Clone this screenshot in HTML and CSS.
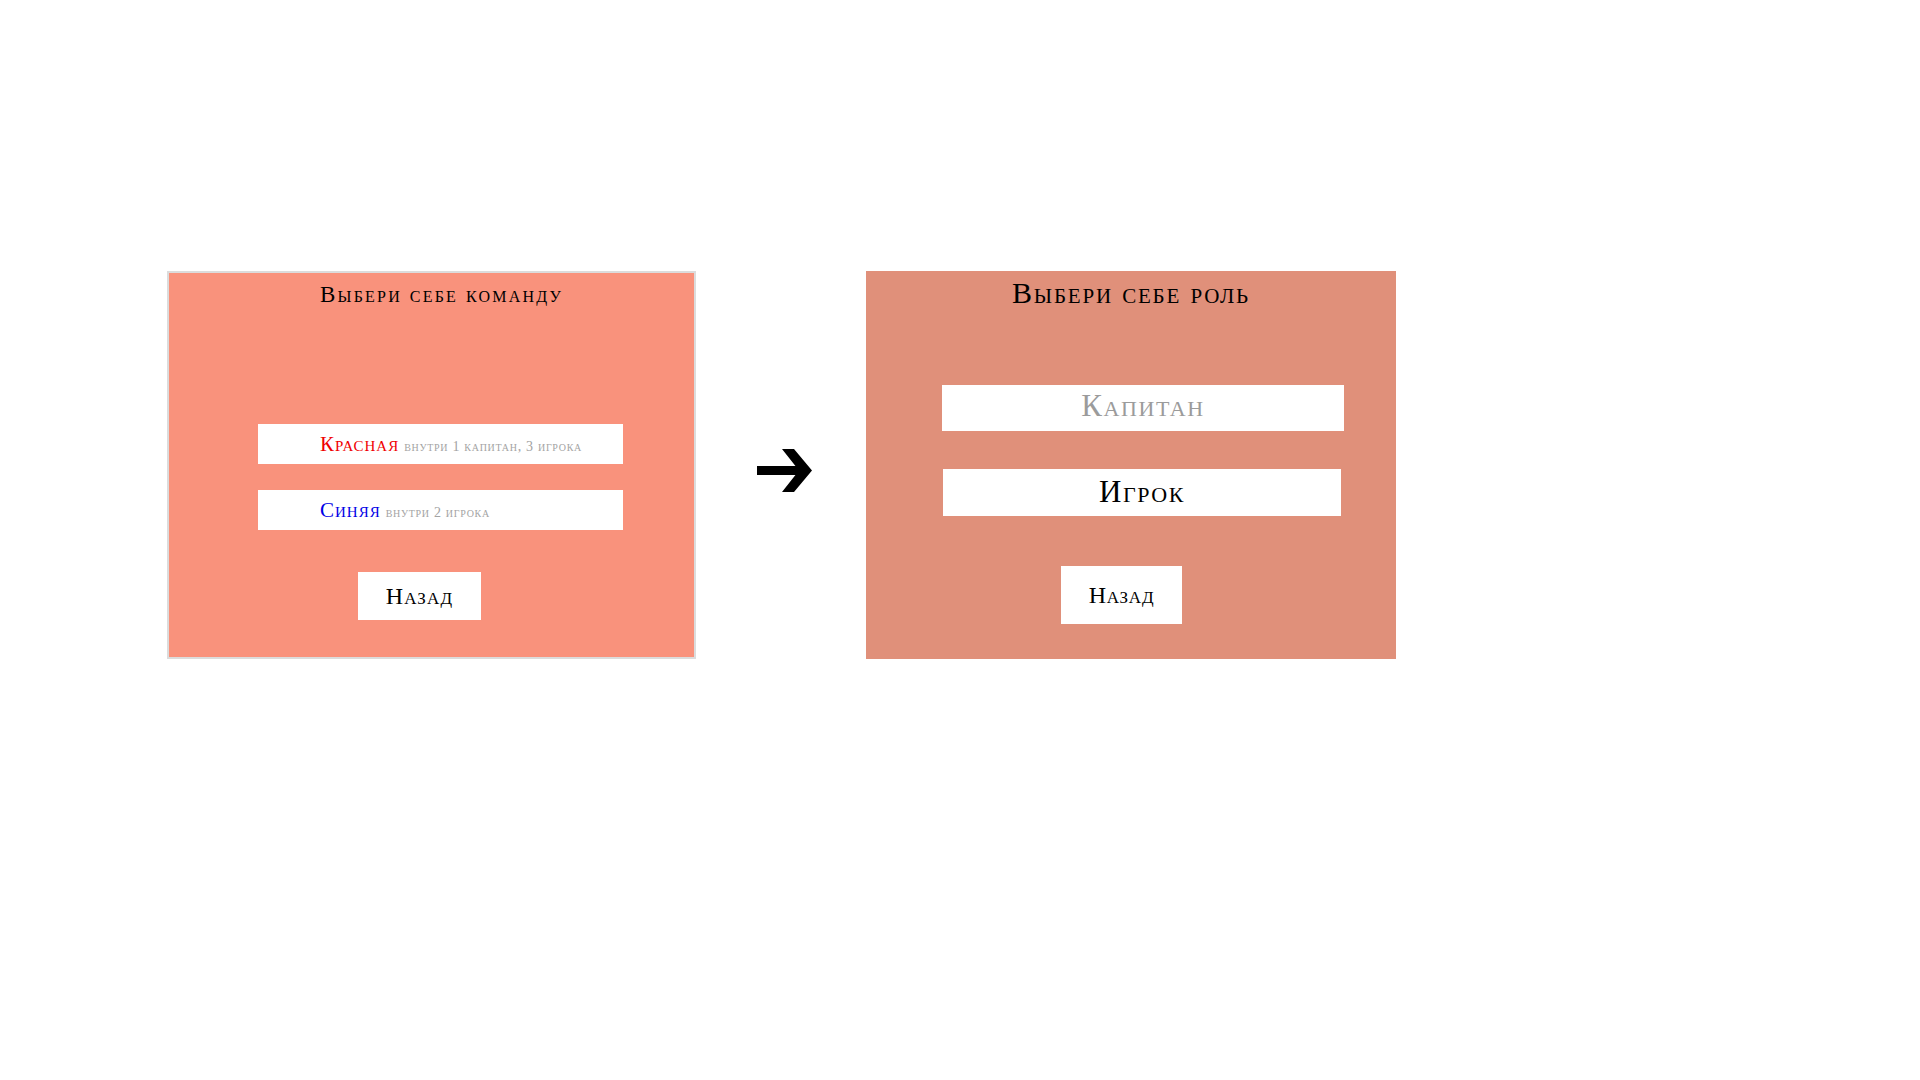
FILE: index.html
```html
<!DOCTYPE html>
<html lang="ru">
<head>
    <meta charset="UTF-8">
    <meta name="viewport" content="width=device-width, initial-scale=1.0">
    <title>Выбор команды и роли</title>
    <link rel="stylesheet" href="styles.css">
</head>
<body>
    <div class="screen">
        <section class="panel panel-team">
            <h2 class="panel-title title-team">Выбери себе команду</h2>
            <div class="option option-red">
                <span class="team team-red">Красная</span>
                <span class="hint">внутри 1 капитан, 3 игрока</span>
            </div>
            <div class="option option-blue">
                <span class="team team-blue">Синяя</span>
                <span class="hint">внутри 2 игрока</span>
            </div>
            <div class="back back-team">Назад</div>
        </section>

        <svg class="arrow" viewBox="0 0 55 46" width="55" height="46">
            <rect x="0" y="18" width="44" height="9" fill="#000"/>
            <polygon points="25,1 37,1 55,22.5 37,44 25,44 42,22.5" fill="#000"/>
        </svg>

        <section class="panel panel-role">
            <h2 class="panel-title title-role">Выбери себе роль</h2>
            <div class="role role-captain">Капитан</div>
            <div class="role role-player">Игрок</div>
            <div class="back back-role">Назад</div>
        </section>
    </div>
</body>
</html>
```

FILE: styles.css
```css
body {
    margin: 0;
    background: #fff;
    font-family: "Liberation Serif", "Times New Roman", serif;
    color: #000;
}

.screen {
    display: flex;
    align-items: flex-start;
    padding: 271px 0 0 167px;
}

.panel {
    display: flex;
    flex-direction: column;
    align-items: flex-start;
    box-sizing: border-box;
}

.panel-team {
    width: 529px;
    height: 388px;
    border: 2px solid #dcdcdc;
    background: #f9927c;
}

.panel-role {
    width: 530px;
    height: 388px;
    background: #e0907a;
}

.arrow {
    display: block;
    margin: 177px 54px 0 61px;
}

.panel-title {
    margin: 0;
    font-weight: 400;
    font-variant: small-caps;
    white-space: nowrap;
}

.title-team {
    margin: 10px 0 0 151px;
    font-size: 23px;
    line-height: 24px;
    letter-spacing: 2.2px;
}

.title-role {
    align-self: center;
    margin-top: 6px;
    font-size: 30px;
    line-height: 32px;
    letter-spacing: 1.8px;
}

/* team options */
.option {
    display: flex;
    align-items: baseline;
    gap: 5px;
    width: 365px;
    height: 40px;
    box-sizing: border-box;
    padding: 8px 0 0 62px;
    margin-left: 89px;
    background: #fff;
    font-variant: small-caps;
    white-space: nowrap;
}

.option-red {
    margin-top: 117px;
}

.option-blue {
    margin-top: 26px;
}

.team {
    font-size: 21px;
    line-height: 24px;
    letter-spacing: 1px;
}

.team-red {
    color: #f00000;
}

.team-blue {
    color: #0000e6;
}

.hint {
    font-size: 14px;
    letter-spacing: 0.7px;
    color: #a3a3a3;
}

/* roles */
.role {
    display: flex;
    align-items: center;
    justify-content: center;
    box-sizing: border-box;
    background: #fff;
    font-variant: small-caps;
    font-size: 31px;
    letter-spacing: 1.6px;
}

.role-captain {
    width: 402px;
    height: 46px;
    padding-bottom: 4px;
    margin: 76px 0 0 76px;
    color: #9b9b9b;
}

.role-player {
    width: 398px;
    height: 47px;
    padding-bottom: 2px;
    margin: 38px 0 0 77px;
}

/* back buttons */
.back {
    display: flex;
    align-items: center;
    justify-content: center;
    background: #fff;
    font-variant: small-caps;
    font-size: 24px;
}

.back-team {
    width: 123px;
    height: 48px;
    margin: 42px 0 0 189px;
    letter-spacing: 1.2px;
}

.back-role {
    width: 121px;
    height: 58px;
    margin: 50px 0 0 195px;
    letter-spacing: 0.8px;
}
```
